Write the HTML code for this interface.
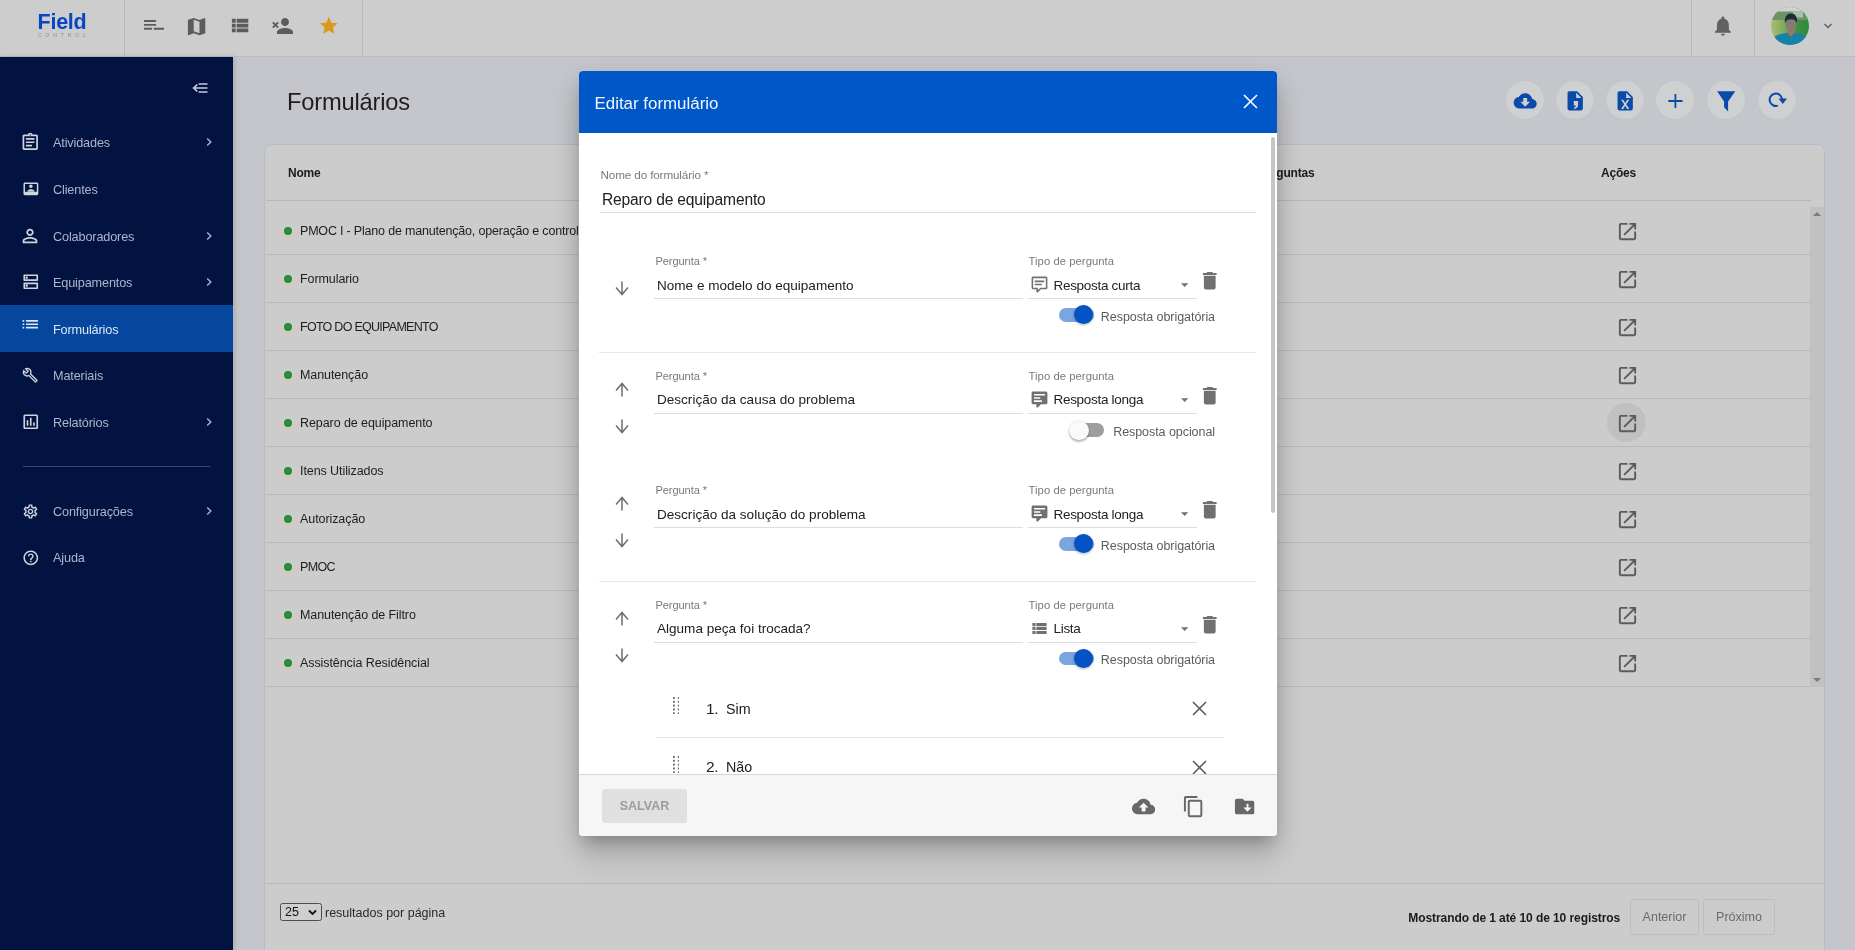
<!DOCTYPE html>
<html lang="pt-BR">
<head>
<meta charset="utf-8">
<title>Formulários - Field Control</title>
<style>
*{box-sizing:border-box;margin:0;padding:0}
html,body{width:1855px;height:950px;overflow:hidden}
body{font-family:"Liberation Sans",Arial,sans-serif;background:#c5c6cb;color:#1f1f1f;position:relative;font-size:13px}
.abs{position:absolute}
svg{display:block}
/* ---------- top bar ---------- */
#topbar{position:absolute;left:0;top:0;width:1855px;height:57px;background:#cdcdcd;border-bottom:1px solid #b4bccd}
#topbar .vl{position:absolute;top:0;width:1px;height:56px;background:#b9b9b9}
#logo{position:absolute;left:37.6px;top:9.5px;width:52px;height:32px}
.tico{position:absolute;top:14px;width:24px;height:24px}
/* ---------- sidebar ---------- */
#side{position:absolute;left:0;top:57px;width:233px;height:893px;background:#021342;box-shadow:2px 0 5px rgba(0,0,0,.13)}
.mi{position:absolute;left:0;width:233px;height:47px;color:#adb5c9;font-size:12.7px;letter-spacing:-.15px}
.mi svg.ic{position:absolute;left:19.7px;top:14.5px;width:20.5px;height:20.5px;fill:#d0d4dd}
.mi span{position:absolute;left:53px;top:17px;line-height:15px;white-space:nowrap}
.mi svg.ch{position:absolute;left:203px;top:17.5px;width:12px;height:12px;fill:none;stroke:#a9b1c6;stroke-width:1.500}
.mi.act{background:#05479f;color:#dfe6f3}
.mi.act svg.ic{fill:#dfe6f3}.mi.act span{top:17.5px}
/* ---------- main ---------- */
#title{position:absolute;left:287px;top:88px;font-size:23.7px;line-height:28px;color:#1e1e1e;letter-spacing:-.2px}
.cbtn{position:absolute;top:81.3px;width:38px;height:38px;border-radius:50%;background:#cfd0d2;box-shadow:0 0 0 1px #c2c4ca}
.cbtn svg{position:absolute;left:0;top:0;width:38px;height:38px;fill:#0a4baa}
#card{position:absolute;left:264px;top:144px;width:1561px;height:822px;background:#cccccc;border:1px solid #b3bccd;border-radius:8px}
.th{position:absolute;top:19px;font-weight:bold;font-size:12px;letter-spacing:-.2px;line-height:15px;color:#1b1b1b;white-space:nowrap}
.row{position:absolute;left:0;width:1545px;height:48px;border-bottom:1px solid #b9b9ba}
.row i{position:absolute;left:18.2px;top:20.3px;width:7.6px;height:7.6px;border-radius:50%;background:#2f8b34}
.row span{position:absolute;left:34px;top:17px;font-size:12.5px;letter-spacing:-.08px;line-height:15px;color:#1d1d1d;white-space:nowrap}
.row svg{position:absolute;left:1349.5px;top:12.7px;width:23px;height:23px;fill:#5c5c5c}
.pb{top:752px;height:36px;border:1px solid #bebebe;border-radius:2px;font-size:12.5px;line-height:35.5px;text-align:center;color:#6a6a6a}

/* ---------- modal ---------- */
#modal{position:absolute;left:579px;top:71px;width:698px;height:764.7px;background:#fff;border-radius:4px;overflow:hidden}
#mshadow{position:absolute;left:579px;top:71px;width:698px;height:764.7px;border-radius:4px;box-shadow:0 10px 14px -6px rgba(0,0,0,.2),0 22px 32px 2px rgba(0,0,0,.13),0 8px 22px 3px rgba(0,0,0,.11)}
#mhead{position:absolute;left:0;top:0;width:698px;height:61.7px;background:#0057c8}
#mhead .t{position:absolute;left:15.5px;top:21.7px;font-size:16.9px;line-height:22px;color:#f1f5fc;white-space:nowrap}
#mbody{position:absolute;left:0;top:62px;width:698px;height:641.3px;overflow:hidden}
#mfoot{position:absolute;left:0;top:703.3px;width:698px;height:62px;background:#f6f6f6;border-top:1px solid #d6d6d6}
.lb{position:absolute;font-size:11.25px;letter-spacing:.06px;line-height:14px;color:#7a7a7a;white-space:nowrap}
.iv{position:absolute;font-size:13.55px;letter-spacing:0;line-height:18px;color:#212121;white-space:nowrap}
.ul{position:absolute;height:1px;background:#dddddd}
.dv{position:absolute;left:20px;width:657px;height:1px;background:#e6e6e6}
.tl{position:absolute;font-size:12.5px;letter-spacing:-.06px;line-height:15px;color:#5c5c5c;white-space:nowrap;text-align:right;right:62px}
.trk{position:absolute;width:34.8px;height:13.6px;border-radius:7px}
.thb{position:absolute;width:19.3px;height:19.3px;border-radius:50%}
.on .trk{background:#7ba5e1}.on .thb{background:#0453c4;box-shadow:0 1px 3px rgba(0,0,0,.3)}
.off .trk{background:#9e9e9e}.off .thb{background:#fafafa;box-shadow:0 2px 2px rgba(0,0,0,.25),0 0 2px rgba(0,0,0,.2)}
.arw{position:absolute;width:14px;height:15px;fill:none;stroke:#6e6e6e;stroke-width:1.500}
.g{fill:#707070}
.lp{font-size:11.1px;letter-spacing:-.1px}
.sv{font-size:13.5px;letter-spacing:-.3px}
.nl{font-size:11.7px;letter-spacing:-.13px;line-height:14px;color:#7a7a7a;white-space:nowrap}
.nv{font-size:15.6px;letter-spacing:-.18px;line-height:20px;color:#212121;white-space:nowrap}
.sb{border-radius:3px;background:#e0e0e0;color:#9c9c9c;font-weight:bold;font-size:12.5px;line-height:34.6px;text-align:center}
#modal,#card,#side,#topbar,#title{will-change:transform}
</style>
</head>
<body>

<!-- ================= TOP BAR ================= -->
<div id="topbar">
  <div class="vl" style="left:124px"></div>
  <div class="vl" style="left:362px"></div>
  <div class="vl" style="left:1691px"></div>
  <div class="vl" style="left:1754px"></div>
  <div id="logo">
    <div class="abs" style="left:0;top:0;font-weight:bold;font-size:21.5px;line-height:24px;color:#0846c4;letter-spacing:-.28px;white-space:nowrap">Field</div>
    <div class="abs" style="left:.5px;top:23.3px;font-size:10px;line-height:10px;color:#8e8e8e;letter-spacing:7.8px;white-space:nowrap;transform:scale(.5);transform-origin:0 0">CONTROL</div>
  </div>
  <svg class="abs" style="left:144px;top:20.400px;width:20px;height:9.700px" viewBox="0 0 20 9.700" fill="#5c5c5c"><path d="M0 0h12.100v1.900H0zM0 3.900h12.100v1.900H0zM0 7.800h8v1.900H0zM9.800 7.800h10.200v1.900H9.800z"/></svg>
  <svg class="abs" style="left:185.3px;top:14.5px;width:23.200px;height:23.200px" viewBox="0 0 24 24" fill="#5c5c5c"><path d="M20.500 3l-.160.030L15 5.100 9 3 3.360 4.900c-.210.070-.360.250-.360.480V20.500c0 .280.220.500.500.500l.160-.030L9 18.900l6 2.100 5.640-1.900c.210-.070.360-.250.360-.480V3.500c0-.280-.220-.500-.500-.500zM15 19l-6-2.110V5l6 2.110V19z"/></svg>
  <svg class="abs" style="left:228px;top:14.350px;width:23.200px;height:23.200px" viewBox="0 0 24 24" fill="#5c5c5c"><path d="M4 14h4v-4H4v4zm0 5h4v-4H4v4zM4 9h4V5H4v4zm5 5h12v-4H9v4zm0 5h12v-4H9v4zM9 5v4h12V5H9z"/></svg>
  <svg class="abs" style="left:269.1px;top:14.200px;width:28px;height:24px" viewBox="-4 0 28 24" fill="#5c5c5c"><path d="M12 12c2.210 0 4-1.790 4-4s-1.790-4-4-4-4 1.790-4 4 1.790 4 4 4zm0 2c-2.670 0-8 1.340-8 4v2h16v-2c0-2.660-5.330-4-8-4z"/><path d="M-.200 8.300L5.200 13.700M5.200 8.300L-.200 13.700" stroke="#5c5c5c" stroke-width="1.900" fill="none"/></svg>
  <svg class="abs" style="left:318.1px;top:15.4px;width:21.600px;height:21.600px" viewBox="0 0 24 24" fill="#d99a1c"><path d="M12 17.270L18.180 21l-1.640-7.030L22 9.240l-7.190-.610L12 2 9.190 8.630 2 9.240l5.460 4.730L5.820 21z"/></svg>
  <svg class="abs" style="left:1711.4px;top:14px;width:23.8px;height:23.8px" viewBox="0 0 24 24" fill="#626262"><path d="M12 22c1.1 0 2-.9 2-2h-4c0 1.1.89 2 2 2zm6-6v-5c0-3.07-1.64-5.64-4.5-6.32V4c0-.83-.67-1.5-1.5-1.5s-1.5.67-1.5 1.5v.68C7.63 5.36 6 7.92 6 11v5l-2 2v1h16v-1l-2-2z"/></svg>
  <svg class="abs" style="left:1771px;top:7px;width:38px;height:38px" viewBox="0 0 38 38">
    <defs><clipPath id="avc"><circle cx="19" cy="19" r="19"/></clipPath>
    <linearGradient id="avg" x1="0" x2="1" y1="0" y2="0"><stop offset="0" stop-color="#a9bf72"/><stop offset=".35" stop-color="#7fa95c"/><stop offset=".7" stop-color="#3f8e46"/><stop offset="1" stop-color="#2f8a3c"/></linearGradient></defs>
    <g clip-path="url(#avc)">
      <rect width="38" height="38" fill="url(#avg)"/>
      <rect width="38" height="5" fill="#cfd2ce"/>
      <rect y="4.500" width="38" height="8.500" fill="#6c9266"/>
      <rect y="4.500" x="22" width="10" height="6" fill="#a9bfae"/>
      <path d="M-1 38V34C2 29.500 8 27 13.500 26.300L17 25.500h6l3.500.800c5 .700 9 3 11 6.500L32 38z" fill="#1682a9"/>
      <path d="M16.500 21h6.800v5.200L19.900 29.500 16.500 26.200z" fill="#a87458"/>
      <ellipse cx="19.900" cy="17.600" rx="5.300" ry="6.600" fill="#857a74"/>
      <path d="M14 16.500C13.200 9.800 16.200 6.600 20 6.600s7 3 6 9.900c-.800-3-2.800-4.300-6-4.300s-5.200 1.300-6 4.300z" fill="#1d2c34"/>
    </g>
  </svg>
  <svg class="abs" style="left:1822px;top:21px;width:12px;height:10px" viewBox="0 0 12 10" fill="none" stroke="#606060" stroke-width="1.35"><path d="M2.5 3l3.5 3.5L9.500 3"/></svg>
</div>

<!-- ================= SIDEBAR ================= -->
<div id="side">
  <svg class="abs" style="left:191px;top:22px;width:18px;height:18px" viewBox="0 0 18 18" fill="none" stroke="#c6ccda" stroke-width="1.6"><path d="M7.500 5h9M7.500 13h9M3 9h13.500M6.200 5.600L2.600 9l3.600 3.400"/></svg>
  <div class="mi" style="top:61.5px"><svg class="ic" style="left:20.15px;top:13.85px;width:20.5px;height:20.5px" viewBox="0 0 24 24"><path d="M7 15h7v2H7zm0-4h10v2H7zm0-4h10v2H7zm12-4h-4.180C14.400 1.840 13.300 1 12 1c-1.300 0-2.400.840-2.820 2H5c-.140 0-.270.010-.400.040-.390.080-.740.280-1.010.550-.180.180-.330.400-.430.640-.100.230-.160.490-.160.770v14c0 .270.060.540.160.780s.250.450.430.640c.270.270.620.470 1.010.550.130.020.260.030.400.030h14c1.100 0 2-.900 2-2V5c0-1.100-.900-2-2-2zm-7-.250c.410 0 .750.340.750.750s-.340.750-.750.750-.750-.340-.750-.750.340-.750.750-.750zM19 19H5V5h14v14z"/></svg><span>Atividades</span><svg class="ch" viewBox="0 0 12 12"><path d="M4.200 2.500L7.800 6 4.200 9.500"/></svg></div>
  <div class="mi" style="top:108.5px"><svg class="ic" style="left:21.50px;top:14.60px;width:17.8px;height:17.8px" viewBox="0 0 24 24"><path d="M20 3.500H4c-1.100 0-2 .900-2 2v13c0 1.100.900 2 2 2h16c1.100 0 2-.900 2-2v-13c0-1.100-.900-2-2-2zm0 12.500H4V5.500h16V16zM12 10.700c1.300 0 2.350-1.050 2.350-2.350S13.300 6 12 6 9.650 7.050 9.650 8.350 10.700 10.700 12 10.700zm4.700 4.100c0-1.550-3.130-2.350-4.700-2.350s-4.700.800-4.700 2.350v.700h9.400v-.700z"/></svg><span>Clientes</span></div>
  <div class="mi" style="top:155.5px"><svg class="ic" style="left:19.40px;top:12.50px;width:22px;height:22px" viewBox="0 0 24 24"><path d="M12 5.900c1.160 0 2.100.940 2.100 2.100s-.940 2.100-2.100 2.100S9.900 9.160 9.900 8s.940-2.100 2.100-2.100m0 9c2.970 0 6.100 1.460 6.100 2.100v1.100H5.900V17c0-.640 3.130-2.100 6.100-2.100M12 4C9.790 4 8 5.790 8 8s1.790 4 4 4 4-1.790 4-4-1.790-4-4-4zm0 9c-2.670 0-8 1.340-8 4v3h16v-3c0-2.660-5.330-4-8-4z"/></svg><span>Colaboradores</span><svg class="ch" viewBox="0 0 12 12"><path d="M4.200 2.500L7.800 6 4.200 9.500"/></svg></div>
  <div class="mi" style="top:201.5px"><svg class="ic" style="left:20.65px;top:13.75px;width:19.5px;height:19.5px" viewBox="0 0 24 24"><path d="M19 15v4H5v-4h14m1-2H4c-.550 0-1 .450-1 1v6c0 .550.450 1 1 1h16c.550 0 1-.450 1-1v-6c0-.550-.450-1-1-1zM7 18.500c-.820 0-1.500-.670-1.500-1.500s.680-1.500 1.500-1.500 1.500.670 1.500 1.500-.670 1.500-1.500 1.500zM19 5v4H5V5h14m1-2H4c-.550 0-1 .450-1 1v6c0 .550.450 1 1 1h16c.550 0 1-.450 1-1V4c0-.550-.450-1-1-1zM7 8.500c-.820 0-1.500-.670-1.500-1.500S6.180 5.500 7 5.500s1.500.680 1.500 1.500S7.830 8.500 7 8.500z"/></svg><span>Equipamentos</span><svg class="ch" viewBox="0 0 12 12"><path d="M4.200 2.500L7.800 6 4.200 9.500"/></svg></div>
  <div class="mi act" style="top:248px;height:46.7px"><svg class="ic" style="left:20.15px;top:9.05px;width:20.5px;height:20.5px" viewBox="0 0 24 24"><path d="M3 13h2v-2H3v2zm0 4h2v-2H3v2zm0-8h2V7H3v2zm4 4h14v-2H7v2zm0 4h14v-2H7v2zM7 7v2h14V7H7z"/></svg><span>Formulários</span></div>
  <div class="mi" style="top:294.5px"><svg class="ic" style="left:22.15px;top:15.55px;width:16.5px;height:16.5px" viewBox="0 0 24 24"><path d="M22.610 18.990l-9.080-9.080c.930-2.340.450-5.100-1.440-7C9.790.610 6.210.400 3.660 2.260L7.500 6.110 6.080 7.520 2.250 3.690C.390 6.230.600 9.820 2.900 12.110c1.860 1.860 4.570 2.350 6.890 1.480l9.110 9.110c.390.390 1.020.390 1.410 0l2.300-2.300c.400-.380.400-1.010 0-1.410zm-3 1.600l-9.460-9.460c-.610.450-1.290.720-2 .820-1.360.200-2.790-.210-3.830-1.250C3.370 9.760 2.930 8.500 3 7.260l3.090 3.090 4.240-4.240-3.090-3.090c1.240-.070 2.490.370 3.440 1.310 1.080 1.080 1.490 2.570 1.240 3.960-.120.710-.420 1.370-.880 1.960l9.450 9.450-.880.890z"/></svg><span>Materiais</span></div>
  <div class="mi" style="top:341.5px"><svg class="ic" style="left:20.65px;top:13.45px;width:19.5px;height:19.5px" viewBox="0 0 24 24"><path d="M19 3H5c-1.100 0-2 .900-2 2v14c0 1.100.900 2 2 2h14c1.100 0 2-.900 2-2V5c0-1.100-.900-2-2-2zm0 16H5V5h14v14zM7 10h2v7H7zm4-3h2v10h-2zm4 6h2v4h-2z"/></svg><span>Relatórios</span><svg class="ch" viewBox="0 0 12 12"><path d="M4.200 2.500L7.800 6 4.200 9.500"/></svg></div>
  <div class="mi" style="top:430.5px"><svg class="ic" style="left:21.90px;top:15.00px;width:17px;height:17px" viewBox="0 0 24 24"><path d="M19.430 12.980c.040-.320.070-.640.070-.980 0-.340-.030-.660-.070-.980l2.110-1.650c.190-.150.240-.420.120-.640l-2-3.460c-.090-.160-.260-.250-.440-.250-.060 0-.120.010-.170.030l-2.490 1c-.520-.400-1.080-.730-1.690-.980l-.380-2.650C14.460 2.180 14.250 2 14 2h-4c-.250 0-.460.180-.490.420l-.380 2.650c-.610.250-1.170.590-1.690.980l-2.490-1c-.060-.020-.120-.030-.180-.030-.170 0-.340.090-.430.250l-2 3.460c-.130.220-.070.490.120.640l2.110 1.650c-.040.320-.070.650-.070.980 0 .330.030.660.070.980l-2.110 1.650c-.190.150-.240.420-.120.640l2 3.460c.090.160.260.250.440.250.060 0 .120-.010.170-.030l2.490-1c.520.400 1.080.730 1.690.980l.380 2.650c.030.240.240.420.490.420h4c.250 0 .460-.180.490-.420l.380-2.650c.610-.250 1.170-.590 1.690-.980l2.490 1c.060.020.120.030.180.030.170 0 .340-.090.430-.250l2-3.460c.120-.220.070-.490-.120-.640l-2.110-1.650zm-1.980-1.710c.040.310.050.520.050.730 0 .210-.020.430-.050.730l-.140 1.130.890.700 1.080.840-.700 1.210-1.270-.510-1.040-.420-.900.680c-.430.320-.840.560-1.250.730l-1.060.430-.160 1.130-.200 1.350h-1.400l-.190-1.350-.160-1.130-1.060-.430c-.430-.180-.830-.410-1.230-.710l-.910-.700-1.060.430-1.270.510-.700-1.210 1.080-.840.890-.700-.140-1.130c-.030-.310-.050-.540-.050-.740s.020-.430.050-.730l.140-1.130-.890-.700-1.080-.840.700-1.210 1.270.510 1.040.420.900-.680c.430-.320.840-.560 1.250-.730l1.060-.430.160-1.130.200-1.350h1.390l.190 1.350.160 1.130 1.060.430c.430.180.830.410 1.230.710l.910.700 1.060-.430 1.270-.510.700 1.210-1.070.850-.890.700.140 1.130zM12 8c-2.210 0-4 1.790-4 4s1.790 4 4 4 4-1.790 4-4-1.790-4-4-4zm0 6c-1.100 0-2-.900-2-2s.900-2 2-2 2 .900 2 2-.900 2-2 2z"/></svg><span>Configurações</span><svg class="ch" viewBox="0 0 12 12"><path d="M4.200 2.500L7.800 6 4.200 9.500"/></svg></div>
  <div class="mi" style="top:476.5px"><svg class="ic" style="left:21.60px;top:15.20px;width:17.6px;height:17.6px" viewBox="0 0 24 24"><path d="M11 18h2v-2h-2v2zm1-16C6.480 2 2 6.480 2 12s4.480 10 10 10 10-4.480 10-10S17.520 2 12 2zm0 18c-4.410 0-8-3.590-8-8s3.590-8 8-8 8 3.590 8 8-3.590 8-8 8zm0-14c-2.210 0-4 1.790-4 4h2c0-1.100.900-2 2-2s2 .900 2 2c0 2-3 1.750-3 5h2c0-2.250 3-2.500 3-5 0-2.210-1.790-4-4-4z"/></svg><span>Ajuda</span></div>
  <div class="abs" style="left:23px;top:409px;width:187px;height:1px;background:#3b4869"></div>
</div>

<!-- ================= MAIN ================= -->
<div id="title">Formulários</div>
<div class="cbtn" style="left:1505.5px"><svg viewBox="0 0 38 38"><g transform="translate(7.70 8.40) scale(0.9583)"><path d="M19.350 10.040C18.670 6.590 15.640 4 12 4 9.110 4 6.600 5.640 5.350 8.040 2.340 8.360 0 10.910 0 14c0 3.310 2.690 6 6 6h13c2.760 0 5-2.240 5-5 0-2.640-2.050-4.780-4.650-4.960zM17 13l-5 5-5-5h3V9h4v4h3z"/></g></svg></div>
<div class="cbtn" style="left:1556.2px"><svg viewBox="0 0 38 38"><g transform="translate(7.70 8.40) scale(0.9583)"><path d="M14 2H6c-1.100 0-2 .900-2 2v16c0 1.100.900 2 2 2h12c1.100 0 2-.900 2-2V8l-6-6zm1 14.200c0 2.200-1.300 3.600-4.200 4.200v-1.500c1.300-.400 1.900-1.100 1.900-2.200h-2.200V12.200H15v4zM13 9V3.500L18.500 9H13z"/></g></svg></div>
<div class="cbtn" style="left:1605.9px"><svg viewBox="0 0 38 38"><g transform="translate(7.70 8.40) scale(0.9583)"><path d="M14 2H6c-1.100 0-2 .900-2 2v16c0 1.100.900 2 2 2h12c1.100 0 2-.900 2-2V8l-6-6zm2.300 18.500h-2.200L12 17.100l-2.100 3.400H7.700l3.200-4.900-3.200-4.900h2.200L12 14.100l2.100-3.400h2.200l-3.200 4.900 3.200 4.900zM13 9V3.500L18.500 9H13z"/></g></svg></div>
<div class="cbtn" style="left:1656.3px"><svg viewBox="0 0 38 38"><path d="M12.300 20h14.200M19.400 12.900v14.200" fill="none" stroke="#0a4baa" stroke-width="1.800"/></svg></div>
<div class="cbtn" style="left:1707.0px"><svg viewBox="0 0 38 38"><path d="M10.100 10.300H28.300L21.100 20.400V30.500L17.100 26.200V20.400z"/></svg></div>
<div class="cbtn" style="left:1757.7px"><svg viewBox="0 0 38 38"><path d="M19.920 24.580A6.200 6.200 0 1 1 23.980 18.200" fill="none" stroke="#0a4baa" stroke-width="2"/><path d="M20.600 17.500h8.400l-4.200 5.400z"/></svg></div>
<div id="card"><div class="abs" style="left:1px;top:2px;width:0;height:0">
  <div class="th" style="left:22px">Nome</div>
  <div class="th" style="left:991.5px">Perguntas</div>
  <div class="th" style="left:1335px">Ações</div>
  <div class="abs" style="left:0;top:53px;width:1545px;height:1px;background:#b8b8b9"></div>
  <div class="row" style="top:60px"><i></i><span style="letter-spacing:-.19px">PMOC I - Plano de manutenção, operação e controle</span><svg viewBox="0 0 24 24"><path d="M19 19H5V5h7V3H5c-1.110 0-2 .900-2 2v14c0 1.100.890 2 2 2h14c1.100 0 2-.900 2-2v-7h-2v7zM14 3v2h3.590l-9.830 9.830 1.410 1.410L19 6.410V10h2V3h-7z"/></svg></div>
  <div class="row" style="top:108px"><i></i><span>Formulario</span><svg viewBox="0 0 24 24"><path d="M19 19H5V5h7V3H5c-1.110 0-2 .900-2 2v14c0 1.100.890 2 2 2h14c1.100 0 2-.900 2-2v-7h-2v7zM14 3v2h3.590l-9.830 9.830 1.410 1.410L19 6.410V10h2V3h-7z"/></svg></div>
  <div class="row" style="top:156px"><i></i><span style="letter-spacing:-.72px">FOTO DO EQUIPAMENTO</span><svg viewBox="0 0 24 24"><path d="M19 19H5V5h7V3H5c-1.110 0-2 .900-2 2v14c0 1.100.890 2 2 2h14c1.100 0 2-.900 2-2v-7h-2v7zM14 3v2h3.590l-9.830 9.830 1.410 1.410L19 6.410V10h2V3h-7z"/></svg></div>
  <div class="row" style="top:204px"><i></i><span>Manutenção</span><svg viewBox="0 0 24 24"><path d="M19 19H5V5h7V3H5c-1.110 0-2 .900-2 2v14c0 1.100.890 2 2 2h14c1.100 0 2-.900 2-2v-7h-2v7zM14 3v2h3.590l-9.830 9.830 1.410 1.410L19 6.410V10h2V3h-7z"/></svg></div>
  <div class="row" style="top:252px"><b class="abs" style="left:1340.9px;top:4px;width:39px;height:39px;border-radius:50%;background:#c0c0c0"></b><i></i><span>Reparo de equipamento</span><svg viewBox="0 0 24 24"><path d="M19 19H5V5h7V3H5c-1.110 0-2 .900-2 2v14c0 1.100.890 2 2 2h14c1.100 0 2-.900 2-2v-7h-2v7zM14 3v2h3.590l-9.830 9.830 1.410 1.410L19 6.410V10h2V3h-7z"/></svg></div>
  <div class="row" style="top:300px"><i></i><span>Itens Utilizados</span><svg viewBox="0 0 24 24"><path d="M19 19H5V5h7V3H5c-1.110 0-2 .900-2 2v14c0 1.100.890 2 2 2h14c1.100 0 2-.900 2-2v-7h-2v7zM14 3v2h3.590l-9.830 9.830 1.410 1.410L19 6.410V10h2V3h-7z"/></svg></div>
  <div class="row" style="top:348px"><i></i><span>Autorização</span><svg viewBox="0 0 24 24"><path d="M19 19H5V5h7V3H5c-1.110 0-2 .900-2 2v14c0 1.100.890 2 2 2h14c1.100 0 2-.900 2-2v-7h-2v7zM14 3v2h3.590l-9.830 9.830 1.410 1.410L19 6.410V10h2V3h-7z"/></svg></div>
  <div class="row" style="top:396px"><i></i><span style="letter-spacing:-.67px">PMOC</span><svg viewBox="0 0 24 24"><path d="M19 19H5V5h7V3H5c-1.110 0-2 .900-2 2v14c0 1.100.890 2 2 2h14c1.100 0 2-.900 2-2v-7h-2v7zM14 3v2h3.590l-9.830 9.830 1.410 1.410L19 6.410V10h2V3h-7z"/></svg></div>
  <div class="row" style="top:444px"><i></i><span>Manutenção de Filtro</span><svg viewBox="0 0 24 24"><path d="M19 19H5V5h7V3H5c-1.110 0-2 .900-2 2v14c0 1.100.890 2 2 2h14c1.100 0 2-.900 2-2v-7h-2v7zM14 3v2h3.590l-9.830 9.830 1.410 1.410L19 6.410V10h2V3h-7z"/></svg></div>
  <div class="row" style="top:492px"><i></i><span>Assistência Residêncial</span><svg viewBox="0 0 24 24"><path d="M19 19H5V5h7V3H5c-1.110 0-2 .900-2 2v14c0 1.100.890 2 2 2h14c1.100 0 2-.900 2-2v-7h-2v7zM14 3v2h3.590l-9.830 9.830 1.410 1.410L19 6.410V10h2V3h-7z"/></svg></div>
  <div class="abs" style="left:1544px;top:60px;width:14px;height:480px;background:#c1c1c1"></div>
  <svg class="abs" style="left:1547px;top:64px;width:8px;height:6px" viewBox="0 0 8 6" fill="#7d7d7d"><path d="M0 5l4-4 4 4z"/></svg>
  <svg class="abs" style="left:1547px;top:530px;width:8px;height:6px" viewBox="0 0 8 6" fill="#7d7d7d"><path d="M0 1l4 4 4-4z"/></svg>
  <div class="abs" style="left:0;top:736px;width:1559px;height:1px;background:#b9b9ba"></div>
  <div class="abs" style="left:14px;top:756px;width:42px;height:18px;border:1px solid #4d4d4d;border-radius:2.5px;background:#cfcfcf;font-size:12.5px;line-height:16.5px;padding-left:4px;color:#111">25<svg class="abs" style="left:27px;top:5px;width:9px;height:7px" viewBox="0 0 9 7" fill="none" stroke="#111" stroke-width="1.8"><path d="M1 1.500l3.500 3.500L8 1.500"/></svg></div>
  <div class="abs" style="left:59px;top:758.6px;font-size:12.5px;line-height:15px;color:#2a2a2a;white-space:nowrap">resultados por página</div>
  <div class="abs" style="left:1142.3px;top:763.5px;font-size:12px;letter-spacing:-.08px;line-height:15px;font-weight:bold;color:#1b1b1b;white-space:nowrap">Mostrando de 1 até 10 de 10 registros</div>
  <div class="abs pb" style="left:1364px;width:69px">Anterior</div>
  <div class="abs pb" style="left:1437px;width:72px">Próximo</div>
</div></div>

<!-- ================= MODAL ================= -->
<!--MODAL-START-->
<div id="mshadow"></div>
<div id="modal">
  <div id="mhead"><div class="t">Editar formulário</div>
    <svg class="abs" style="left:663.6px;top:22.7px;width:15px;height:15px" viewBox="0 0 15 15" fill="none" stroke="#fff" stroke-width="1.600"><path d="M1 1l13 13M14 1L1 14"/></svg>
  </div>
  <div id="mbody">
    <div class="abs nl" style="left:21.5px;top:35px">Nome do formulário *</div>
    <div class="abs nv" style="left:23px;top:57px">Reparo de equipamento</div>
    <div class="ul" style="left:21px;width:656px;top:79px"></div>
    <svg class="arw" style="left:35.8px;top:148.2px" viewBox="0 0 14 15"><path d="M7 .500V13.500M1 6.600L7 13.500 13 6.600"/></svg>
    <div class="lb lp" style="left:76.5px;top:121px">Pergunta *</div>
    <div class="iv" style="left:78px;top:143.7px">Nome e modelo do equipamento</div>
    <div class="ul" style="left:75px;width:369px;top:164.7px"></div>
    <div class="lb" style="left:449.5px;top:121px">Tipo de pergunta</div>
    <svg class="abs g" style="left:450.7px;top:141.7px;width:19px;height:19px" viewBox="0 0 24 24"><path d="M9 22a1 1 0 0 1-1-1v-3H4a2 2 0 0 1-2-2V4c0-1.110.900-2 2-2h16a2 2 0 0 1 2 2v12a2 2 0 0 1-2 2h-6.100l-3.700 3.710c-.200.190-.450.290-.700.290H9m1-6v3.080L13.080 16H20V4H4v12h6M6 7h12v2H6V7m0 4h9v2H6v-2z"/></svg>
    <div class="iv sv" style="left:474.5px;top:143.7px">Resposta curta</div>
    <svg class="abs g" style="left:601.7px;top:150px;width:7.400px;height:4.100px" viewBox="0 0 8 4"><path d="M0 0h8L4 4z"/></svg>
    <div class="ul" style="left:449px;width:169px;top:164.7px"></div>
    <svg class="abs g" style="left:619.05px;top:136.35px;width:23.500px;height:23.500px" viewBox="0 0 24 24"><path d="M6 19c0 1.100.900 2 2 2h8c1.100 0 2-.900 2-2V7H6v12zM19 4h-3.500l-1-1h-5l-1 1H5v2h14V4z"/></svg>
    <div class="on"><div class="trk" style="left:480.2px;top:175px"></div><div class="thb" style="left:494.9px;top:172.15px"></div></div><div class="tl" style="top:176.6px">Resposta obrigatória</div>
    <div class="dv" style="top:218.7px"></div>
    <svg class="arw" style="left:35.8px;top:248.85px" viewBox="0 0 14 15"><path d="M7 14.500V1.500M1 8.400L7 1.500 13 8.400"/></svg>
    <svg class="arw" style="left:35.8px;top:285.85px" viewBox="0 0 14 15"><path d="M7 .500V13.500M1 6.600L7 13.500 13 6.600"/></svg>
    <div class="lb lp" style="left:76.5px;top:236px">Pergunta *</div>
    <div class="iv" style="left:78px;top:257.7px">Descrição da causa do problema</div>
    <div class="ul" style="left:75px;width:369px;top:279.7px"></div>
    <div class="lb" style="left:449.5px;top:236px">Tipo de pergunta</div>
    <svg class="abs g" style="left:450.7px;top:256.7px;width:19px;height:19px" viewBox="0 0 24 24"><path d="M9 22a1 1 0 0 1-1-1v-3H4a2 2 0 0 1-2-2V4c0-1.110.900-2 2-2h16a2 2 0 0 1 2 2v12a2 2 0 0 1-2 2h-6.100l-3.700 3.710c-.200.190-.450.290-.700.290H9M5 5v2h14V5H5m0 4v2h8V9H5m0 4v2h10v-2H5z"/></svg>
    <div class="iv sv" style="left:474.5px;top:257.7px">Resposta longa</div>
    <svg class="abs g" style="left:601.7px;top:265px;width:7.400px;height:4.100px" viewBox="0 0 8 4"><path d="M0 0h8L4 4z"/></svg>
    <div class="ul" style="left:449px;width:169px;top:279.7px"></div>
    <svg class="abs g" style="left:619.05px;top:251.35px;width:23.500px;height:23.500px" viewBox="0 0 24 24"><path d="M6 19c0 1.100.900 2 2 2h8c1.100 0 2-.900 2-2V7H6v12zM19 4h-3.500l-1-1h-5l-1 1H5v2h14V4z"/></svg>
    <div class="off"><div class="trk" style="left:490.6px;top:290px"></div><div class="thb" style="left:490.3px;top:287.75px"></div></div><div class="tl" style="top:291.6px">Resposta opcional</div>
    <svg class="arw" style="left:35.8px;top:363.35px" viewBox="0 0 14 15"><path d="M7 14.500V1.500M1 8.400L7 1.500 13 8.400"/></svg>
    <svg class="arw" style="left:35.8px;top:400.35px" viewBox="0 0 14 15"><path d="M7 .500V13.500M1 6.600L7 13.500 13 6.600"/></svg>
    <div class="lb lp" style="left:76.5px;top:350px">Pergunta *</div>
    <div class="iv" style="left:78px;top:372.7px">Descrição da solução do problema</div>
    <div class="ul" style="left:75px;width:369px;top:393.7px"></div>
    <div class="lb" style="left:449.5px;top:350px">Tipo de pergunta</div>
    <svg class="abs g" style="left:450.7px;top:370.7px;width:19px;height:19px" viewBox="0 0 24 24"><path d="M9 22a1 1 0 0 1-1-1v-3H4a2 2 0 0 1-2-2V4c0-1.110.900-2 2-2h16a2 2 0 0 1 2 2v12a2 2 0 0 1-2 2h-6.100l-3.700 3.710c-.200.190-.450.290-.700.290H9M5 5v2h14V5H5m0 4v2h8V9H5m0 4v2h10v-2H5z"/></svg>
    <div class="iv sv" style="left:474.5px;top:372.7px">Resposta longa</div>
    <svg class="abs g" style="left:601.7px;top:379px;width:7.400px;height:4.100px" viewBox="0 0 8 4"><path d="M0 0h8L4 4z"/></svg>
    <div class="ul" style="left:449px;width:169px;top:393.7px"></div>
    <svg class="abs g" style="left:619.05px;top:365.35px;width:23.500px;height:23.500px" viewBox="0 0 24 24"><path d="M6 19c0 1.100.900 2 2 2h8c1.100 0 2-.900 2-2V7H6v12zM19 4h-3.500l-1-1h-5l-1 1H5v2h14V4z"/></svg>
    <div class="on"><div class="trk" style="left:480.2px;top:404px"></div><div class="thb" style="left:494.9px;top:401.15px"></div></div><div class="tl" style="top:405.6px">Resposta obrigatória</div>
    <div class="dv" style="top:448px"></div>
    <svg class="arw" style="left:35.8px;top:477.7px" viewBox="0 0 14 15"><path d="M7 14.500V1.500M1 8.400L7 1.500 13 8.400"/></svg>
    <svg class="arw" style="left:35.8px;top:514.7px" viewBox="0 0 14 15"><path d="M7 .500V13.500M1 6.600L7 13.500 13 6.600"/></svg>
    <div class="lb lp" style="left:76.5px;top:464.8px">Pergunta *</div>
    <div class="iv" style="left:78px;top:486.7px">Alguma peça foi trocada?</div>
    <div class="ul" style="left:75px;width:369px;top:508.5px"></div>
    <div class="lb" style="left:449.5px;top:464.8px">Tipo de pergunta</div>
    <svg class="abs g" style="left:450.7px;top:485.5px;width:19px;height:19px" viewBox="0 0 24 24"><path d="M3 14h4v-4H3v4zm0 5h4v-4H3v4zM3 9h4V5H3v4zm5 5h13v-4H8v4zm0 5h13v-4H8v4zM8 5v4h13V5H8z"/></svg>
    <div class="iv sv" style="left:474.5px;top:486.7px">Lista</div>
    <svg class="abs g" style="left:601.7px;top:493.8px;width:7.400px;height:4.100px" viewBox="0 0 8 4"><path d="M0 0h8L4 4z"/></svg>
    <div class="ul" style="left:449px;width:169px;top:508.5px"></div>
    <svg class="abs g" style="left:619.05px;top:480.15px;width:23.500px;height:23.500px" viewBox="0 0 24 24"><path d="M6 19c0 1.100.900 2 2 2h8c1.100 0 2-.900 2-2V7H6v12zM19 4h-3.500l-1-1h-5l-1 1H5v2h14V4z"/></svg>
    <div class="on"><div class="trk" style="left:480.2px;top:518.8px"></div><div class="thb" style="left:494.9px;top:515.95px"></div></div><div class="tl" style="top:520.4px">Resposta obrigatória</div>
    <svg class="abs" style="left:93.8px;top:563.8px;width:6.700px;height:17.300px" viewBox="0 0 6.700 17.300" fill="#6c6c6c"><rect x="0" y="0.00" width="1.900" height="1.900"/><rect x="0" y="3.84" width="1.900" height="1.900"/><rect x="0" y="7.68" width="1.900" height="1.900"/><rect x="0" y="11.52" width="1.900" height="1.900"/><rect x="0" y="15.36" width="1.900" height="1.900"/><rect x="4.8" y="0.00" width="1.900" height="1.900"/><rect x="4.8" y="3.84" width="1.900" height="1.900"/><rect x="4.8" y="7.68" width="1.900" height="1.900"/><rect x="4.8" y="11.52" width="1.900" height="1.900"/><rect x="4.8" y="15.36" width="1.900" height="1.900"/></svg>
    <div class="abs" style="left:127px;top:565.8px;font-size:15.500px;line-height:20px;color:#212121;white-space:nowrap;letter-spacing:-.3px">1.</div>
    <div class="abs" style="left:147px;top:566.3px;font-size:14.300px;line-height:20px;color:#212121;white-space:nowrap">Sim</div>
    <svg class="abs" style="left:613.2px;top:567.9px;width:15px;height:15px" viewBox="0 0 15 15" fill="none" stroke="#555" stroke-width="1.500"><path d="M1 1l13 13M14 1L1 14"/></svg>
    <div class="abs" style="left:76.5px;width:568.500px;top:604px;height:1px;background:#e6e6e6"></div>
    <svg class="abs" style="left:93.8px;top:622.5px;width:6.700px;height:17.300px" viewBox="0 0 6.700 17.300" fill="#6c6c6c"><rect x="0" y="0.00" width="1.900" height="1.900"/><rect x="0" y="3.84" width="1.900" height="1.900"/><rect x="0" y="7.68" width="1.900" height="1.900"/><rect x="0" y="11.52" width="1.900" height="1.900"/><rect x="0" y="15.36" width="1.900" height="1.900"/><rect x="4.8" y="0.00" width="1.900" height="1.900"/><rect x="4.8" y="3.84" width="1.900" height="1.900"/><rect x="4.8" y="7.68" width="1.900" height="1.900"/><rect x="4.8" y="11.52" width="1.900" height="1.900"/><rect x="4.8" y="15.36" width="1.900" height="1.900"/></svg>
    <div class="abs" style="left:127px;top:623.5px;font-size:15.500px;line-height:20px;color:#212121;white-space:nowrap;letter-spacing:-.3px">2.</div>
    <div class="abs" style="left:147px;top:624px;font-size:14.300px;line-height:20px;color:#212121;white-space:nowrap">Não</div>
    <svg class="abs" style="left:613.2px;top:626.6px;width:15px;height:15px" viewBox="0 0 15 15" fill="none" stroke="#555" stroke-width="1.500"><path d="M1 1l13 13M14 1L1 14"/></svg>
    <div class="abs" style="left:692.2px;top:4.4px;width:3.600px;height:376px;border-radius:2px;background:#c6c6c6"></div>
  </div>
  <div id="mfoot">
    <div class="abs sb" style="left:23px;top:14.200px;width:85px;height:33.300px">SALVAR</div>
    <svg class="abs" style="left:553.1px;top:19.4px;width:23.200px;height:23.200px" viewBox="0 0 24 24" fill="#676767"><path d="M19.350 10.040C18.670 6.590 15.640 4 12 4 9.110 4 6.600 5.640 5.350 8.040 2.340 8.360 0 10.910 0 14c0 3.310 2.690 6 6 6h13c2.760 0 5-2.240 5-5 0-2.640-2.050-4.780-4.650-4.960zM14 13v4h-4v-4H7l5-5 5 5h-3z"/></svg>
    <svg class="abs" style="left:603.2px;top:19.4px;width:23.200px;height:23.200px" viewBox="0 0 24 24" fill="#676767"><path d="M16 1H4c-1.100 0-2 .900-2 2v14h2V3h12V1zm3 4H8c-1.100 0-2 .900-2 2v14c0 1.100.900 2 2 2h11c1.100 0 2-.900 2-2V7c0-1.100-.900-2-2-2zm0 16H8V7h11v14z"/></svg>
    <svg class="abs" style="left:653.8px;top:19.4px;width:23.200px;height:23.200px" viewBox="0 0 24 24" fill="#676767"><path d="M20 6a2 2 0 0 1 2 2v10a2 2 0 0 1-2 2H4c-1.110 0-2-.900-2-2V6c0-1.110.890-2 2-2h6l2 2h8m-.750 7H16V9h-2v4h-3.250L15 17.250z"/></svg>
  </div>
</div>
<!--MODAL-END-->

</body>
</html>
